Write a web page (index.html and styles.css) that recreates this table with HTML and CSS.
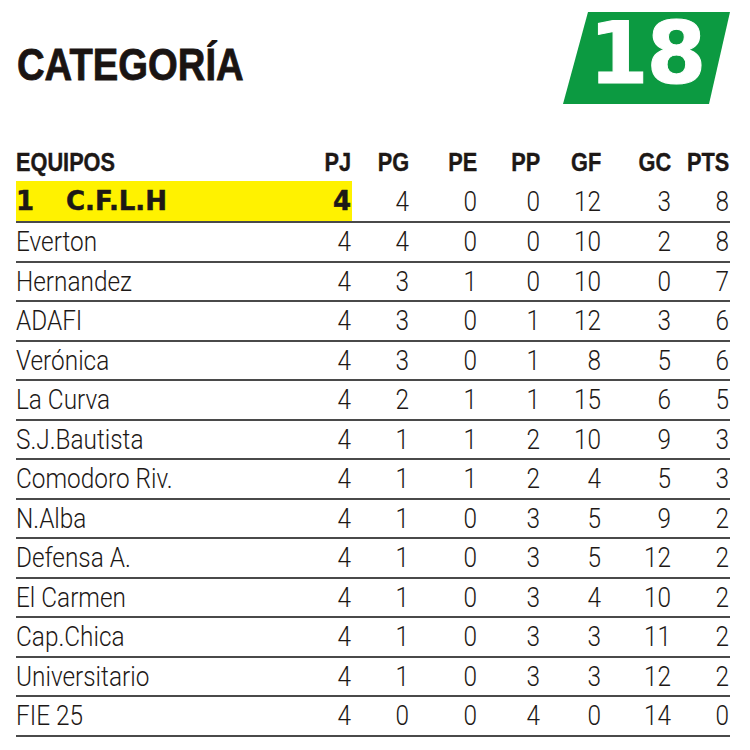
FILE: index.html
```html
<!DOCTYPE html>
<html lang="es">
<head>
<meta charset="utf-8">
<title>Categoría 18</title>
<link rel="stylesheet" href="styles.css">
</head>
<body>
<div class="page">
  <header class="top">
    <h1 class="title">CATEGORÍA</h1>
    <div class="badge">18</div>
  </header>
  <div class="table">
    <div class="row head">
      <div class="c name">EQUIPOS</div><div class="c">PJ</div><div class="c">PG</div><div class="c">PE</div><div class="c">PP</div><div class="c">GF</div><div class="c">GC</div><div class="c">PTS</div>
    </div>
    <div class="row leader">
      <div class="c name hl"><span class="pos">1</span>C.F.L.H</div><div class="c hl">4</div><div class="c">4</div><div class="c">0</div><div class="c">0</div><div class="c">12</div><div class="c">3</div><div class="c">8</div>
    </div>
    <div class="row"><div class="c name">Everton</div><div class="c">4</div><div class="c">4</div><div class="c">0</div><div class="c">0</div><div class="c">10</div><div class="c">2</div><div class="c">8</div></div>
    <div class="row"><div class="c name">Hernandez</div><div class="c">4</div><div class="c">3</div><div class="c">1</div><div class="c">0</div><div class="c">10</div><div class="c">0</div><div class="c">7</div></div>
    <div class="row"><div class="c name">ADAFI</div><div class="c">4</div><div class="c">3</div><div class="c">0</div><div class="c">1</div><div class="c">12</div><div class="c">3</div><div class="c">6</div></div>
    <div class="row"><div class="c name">Verónica</div><div class="c">4</div><div class="c">3</div><div class="c">0</div><div class="c">1</div><div class="c">8</div><div class="c">5</div><div class="c">6</div></div>
    <div class="row"><div class="c name">La Curva</div><div class="c">4</div><div class="c">2</div><div class="c">1</div><div class="c">1</div><div class="c">15</div><div class="c">6</div><div class="c">5</div></div>
    <div class="row"><div class="c name">S.J.Bautista</div><div class="c">4</div><div class="c">1</div><div class="c">1</div><div class="c">2</div><div class="c">10</div><div class="c">9</div><div class="c">3</div></div>
    <div class="row"><div class="c name">Comodoro Riv.</div><div class="c">4</div><div class="c">1</div><div class="c">1</div><div class="c">2</div><div class="c">4</div><div class="c">5</div><div class="c">3</div></div>
    <div class="row"><div class="c name">N.Alba</div><div class="c">4</div><div class="c">1</div><div class="c">0</div><div class="c">3</div><div class="c">5</div><div class="c">9</div><div class="c">2</div></div>
    <div class="row"><div class="c name">Defensa A.</div><div class="c">4</div><div class="c">1</div><div class="c">0</div><div class="c">3</div><div class="c">5</div><div class="c">12</div><div class="c">2</div></div>
    <div class="row"><div class="c name">El Carmen</div><div class="c">4</div><div class="c">1</div><div class="c">0</div><div class="c">3</div><div class="c">4</div><div class="c">10</div><div class="c">2</div></div>
    <div class="row"><div class="c name">Cap.Chica</div><div class="c">4</div><div class="c">1</div><div class="c">0</div><div class="c">3</div><div class="c">3</div><div class="c">11</div><div class="c">2</div></div>
    <div class="row"><div class="c name">Universitario</div><div class="c">4</div><div class="c">1</div><div class="c">0</div><div class="c">3</div><div class="c">3</div><div class="c">12</div><div class="c">2</div></div>
    <div class="row"><div class="c name">FIE 25</div><div class="c">4</div><div class="c">0</div><div class="c">0</div><div class="c">4</div><div class="c">0</div><div class="c">14</div><div class="c">0</div></div>
  </div>
</div>
</body>
</html>
```

FILE: styles.css
```css
html, body {
  margin: 0;
  padding: 0;
  background: #ffffff;
}

.page {
  padding: 0 20px 0 16px;
  color: #1d1816;
  font-family: Roboto, "Liberation Sans", sans-serif;
}

.top {
  display: flex;
  justify-content: space-between;
  align-items: flex-start;
  height: 143px;
}

.title {
  margin: 40px 0 0 1px;
  font-family: "Liberation Sans", Arial, sans-serif;
  font-weight: 700;
  font-size: 45px;
  line-height: 50px;
  color: #1a1412;
  -webkit-text-stroke: 0.8px #1a1412;
  transform: scaleX(0.85);
  transform-origin: left center;
}

.badge {
  margin-top: 12px;
  width: 167px;
  height: 92px;
  background: #0c9a41;
  clip-path: polygon(25px 0, 100% 0, calc(100% - 21px) 100%, 0 100%);
  color: #ffffff;
  font-family: "DejaVu Sans", sans-serif;
  font-weight: 700;
  font-size: 86px;
  line-height: 82px;
  text-align: center;
  letter-spacing: -2px;
  -webkit-text-stroke: 1px #ffffff;
}

.table {
  display: flex;
  flex-direction: column;
}

.row {
  display: grid;
  grid-template-columns: 1fr 51px 58px 68px 63px 61px 70px 58px;
  height: 37.5px;
  border-bottom: 2px solid #4a4a4a;
  font-size: 28px;
  font-weight: 300;
}

.row.head {
  height: 38px;
  border-bottom: none;
  font-family: "Liberation Sans", Arial, sans-serif;
  font-size: 26.5px;
  font-weight: 700;
  -webkit-text-stroke: 0.4px #1d1816;
}

.row.leader {
  height: 40px;
}

.c {
  display: flex;
  align-items: center;
  justify-content: flex-end;
  padding-right: 1px;
  white-space: nowrap;
  transform: scaleX(0.87);
  transform-origin: right center;
}

.c.name {
  justify-content: flex-start;
  padding-right: 0;
  transform-origin: left center;
}

.head .c {
  transform: scaleX(0.82);
}

.leader .c.hl {
  background: #fff200;
  font-family: "DejaVu Sans", sans-serif;
  font-weight: 700;
  font-size: 26px;
  transform: none;
  -webkit-text-stroke: 0.5px #1d1816;
}

.pos {
  display: inline-block;
  width: 50px;
}
```
